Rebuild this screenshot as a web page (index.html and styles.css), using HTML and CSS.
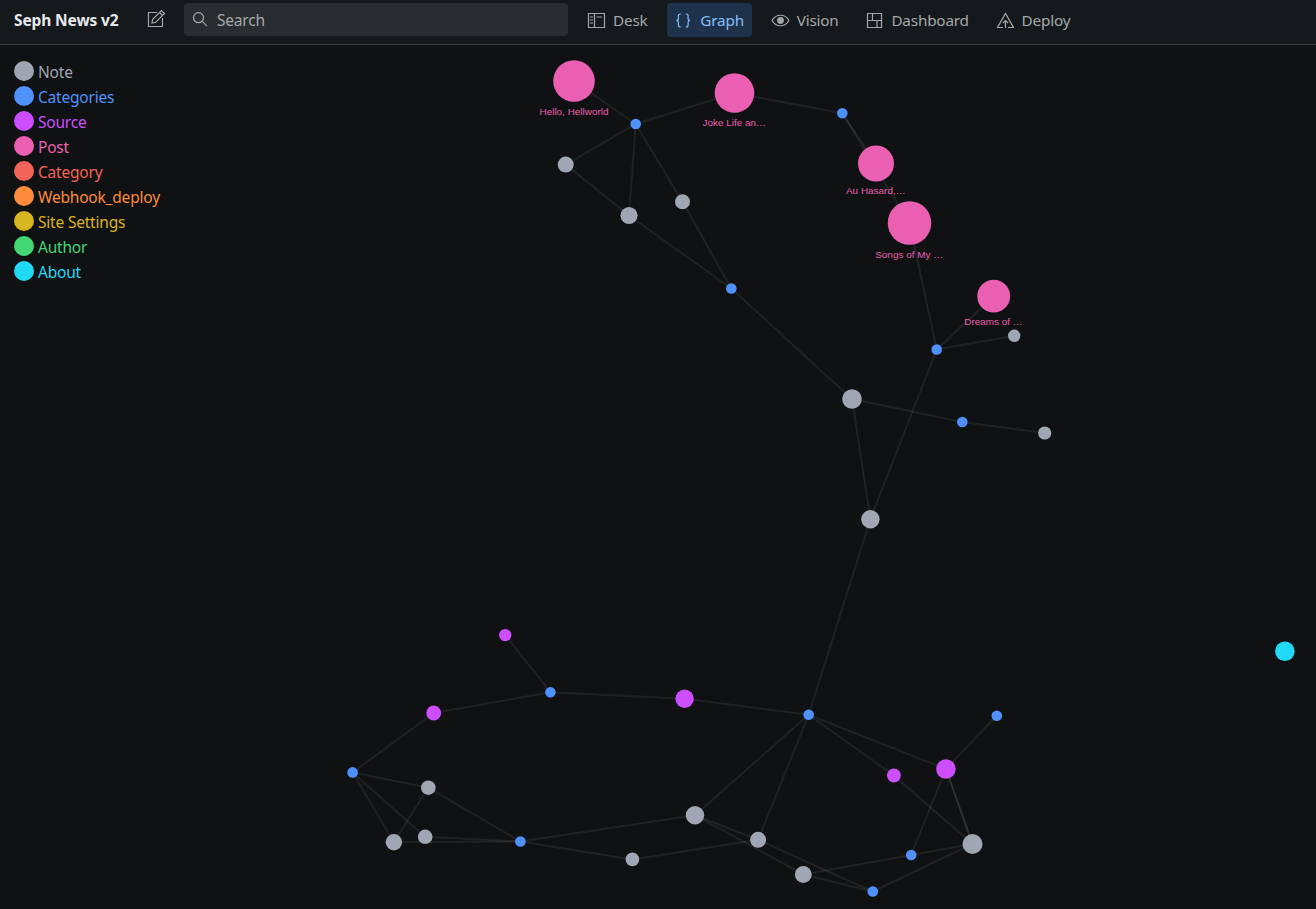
FILE: index.html
```html
<!DOCTYPE html>
<html lang="en">
<head>
    <meta charset="UTF-8">
    <meta name="viewport" content="width=device-width, initial-scale=1.0">
    <title>Seph News v2</title>
    <link rel="stylesheet" href="styles.css">
</head>
<body>
    <header class="navbar">
        <div class="brand">Seph News v2</div>
        <button class="compose" aria-label="Create">
            <svg class="icon" viewBox="0 0 25 25"><path d="M17 6L19 8M14 5.5H5.5V19.5H19.5V11M9 16L9.5 12.5L18.5 3.5L21.5 6.5L12.5 15.5L9 16Z"/></svg>
        </button>
        <div class="search">
            <svg class="search-icon" viewBox="0 0 25 25"><circle cx="10.5" cy="10.7" r="5"/><path d="M14.2 14.4L19 19.2"/></svg>
            <span>Search</span>
        </div>
        <nav class="tools">
            <a class="tool">
                <svg class="icon" viewBox="0 0 25 25"><path d="M10.5 5.5V19.5M6 9H9M6 12H9M6 15H9M12.5 9H18M4.5 5.5H20.5V19.5H4.5Z"/></svg>
                <span>Desk</span>
            </a>
            <a class="tool active">
                <svg class="icon" viewBox="0 0 25 25"><path d="M9.8 6H9.3C7.9 6 7.4 6.8 7.4 8V10.5C7.4 11.8 6.6 12.5 5.3 12.5C6.6 12.5 7.4 13.2 7.4 14.5V17C7.4 18.2 7.9 19 9.3 19H9.8M14.7 6H15.2C16.6 6 17.1 6.8 17.1 8V10.5C17.1 11.8 17.9 12.5 19.2 12.5C17.9 12.5 17.1 13.2 17.1 14.5V17C17.1 18.2 16.6 19 15.2 19H14.7"/></svg>
                <span>Graph</span>
            </a>
            <a class="tool">
                <svg class="icon" viewBox="0 0 25 25"><path d="M4 12.5C8 5.5 17 5.5 21 12.5C17 19.5 8 19.5 4 12.5Z"/><circle class="pupil" cx="12.5" cy="12.5" r="3.4"/></svg>
                <span>Vision</span>
            </a>
            <a class="tool">
                <svg class="icon" viewBox="0 0 25 25"><path d="M5.5 5.5H19.5V19.5H5.5ZM5.5 12.5H19.5M10.5 5.5V12.5M15 12.5V19.5"/></svg>
                <span>Dashboard</span>
            </a>
            <a class="tool">
                <svg class="icon" viewBox="0 0 25 25"><path d="M10 19.5H4.5L12.5 5.5L20.5 19.5H15M12.5 20V12.5M9.8 15.2L12.5 12.5L15.2 15.2"/></svg>
                <span>Deploy</span>
            </a>
        </nav>
    </header>
    <main class="graph">
        <svg class="canvas" viewBox="0 45 1316 864">
            <g id="links"></g>
            <g id="nodes"></g>
            <g class="node-labels">
                <text x="574" y="115">Hello, Hellworld</text>
                <text x="734.3" y="126">Joke Life an…</text>
                <text x="875.8" y="194">Au Hasard,…</text>
                <text x="909.2" y="258">Songs of My …</text>
                <text x="993.5" y="325">Dreams of …</text>
            </g>
        </svg>
        <ul class="legend">
            <li class="note">Note</li>
            <li class="categories">Categories</li>
            <li class="source">Source</li>
            <li class="post">Post</li>
            <li class="category">Category</li>
            <li class="webhook">Webhook_deploy</li>
            <li class="settings">Site Settings</li>
            <li class="author">Author</li>
            <li class="about">About</li>
        </ul>
    </main>
    <script src="graph.js"></script>
</body>
</html>
```
FILE: styles.css
```css
body {
    margin: 0;
    height: 100vh;
    display: flex;
    flex-direction: column;
    overflow: hidden;
    background: #101112;
    color: #a3a7ab;
    font-family: "Segoe UI", "Noto Sans", sans-serif;
    font-size: 15.5px;
    letter-spacing: -0.2px;
    line-height: 20px;
}
.navbar {
    display: flex;
    box-sizing: border-box;
    height: 45px;
    padding: 3px 0 0 14px;
    background: #15191c;
    border-bottom: 1px solid #3a3c42;
}
.brand {
    width: 129px;
    line-height: 35px;
    font-weight: 700;
    letter-spacing: -0.12px;
    color: #e6e8ec;
}
.compose {
    width: 25px;
    height: 33px;
    padding: 0;
    border: none;
    background: none;
    color: inherit;
}
.icon {
    width: 25px;
    height: 25px;
    flex: none;
    display: block;
    fill: none;
    stroke: currentColor;
    stroke-width: 1.2;
}
.icon .pupil {
    fill: currentColor;
    stroke: none;
}
.search {
    display: flex;
    align-items: center;
    box-sizing: border-box;
    width: 384px;
    height: 33px;
    margin-left: 16px;
    padding-left: 4px;
    gap: 4px;
    border-radius: 4px;
    background: #2a2d30;
}
.search-icon {
    width: 25px;
    height: 25px;
    fill: none;
    stroke: currentColor;
    stroke-width: 1.2;
}
.tools {
    display: flex;
    gap: 12px;
    margin-left: 12px;
}
.tool {
    display: flex;
    align-items: center;
    gap: 4px;
    height: 34px;
    padding: 0 7.8px 0 4px;
    border-radius: 4px;
    font-size: 15.3px;
}
.tool.active {
    background: #1e334b;
    color: #85bdf8;
}
.graph {
    position: relative;
    flex: 1;
}
.canvas {
    display: block;
    width: 1316px;
    height: 864px;
}
.canvas line {
    stroke: #fff;
    stroke-opacity: 0.07;
    stroke-width: 2;
}
.node-labels {
    font: 9.95px "Liberation Sans", Arial, sans-serif;
    letter-spacing: 0;
    text-anchor: middle;
    fill: #ea5fb1;
}
.legend {
    position: absolute;
    top: 15px;
    left: 14px;
    margin: 0;
    padding: 0;
    list-style: none;
}
.legend li {
    display: flex;
    gap: 4px;
    height: 25px;
    line-height: 25px;
}
.legend li::before {
    content: "";
    width: 20px;
    height: 20px;
    margin-top: 1px;
    border-radius: 50%;
    background: currentColor;
}
.note { color: #9fa6b4; fill: #9fa6b4; }
.categories { color: #4e91fc; fill: #4e91fc; }
.source { color: #cc4efe; fill: #cc4efe; }
.post { color: #ea5fb1; fill: #ea5fb1; }
.category { color: #f46458; fill: #f46458; }
.webhook { color: #fc8c3c; fill: #fc8c3c; }
.settings { color: #d8b420; fill: #d8b420; }
.author { color: #43d675; fill: #43d675; }
.about { color: #22d9f6; fill: #22d9f6; }
```
FILE: graph.js
```javascript
// [x, y, radius, type]
const nodes = {
    hello: [574, 81, 20.8, "post"],
    joke: [734.5, 93, 19.8, "post"],
    hasard: [876, 163.5, 18, "post"],
    songs: [909.5, 223, 21.8, "post"],
    dreams: [993.7, 296.2, 16.4, "post"],
    c1: [635.7, 124, 5.3, "categories"],
    c2: [842.3, 113.3, 5.3, "categories"],
    c3: [731.3, 288.5, 5.3, "categories"],
    c4: [936.7, 349.5, 5.3, "categories"],
    c5: [962.3, 422, 5.3, "categories"],
    c6: [550.4, 692.2, 5.3, "categories"],
    c7: [352.6, 772.4, 5.3, "categories"],
    c8: [520.4, 841.5, 5.3, "categories"],
    c9: [808.7, 714.8, 5.3, "categories"],
    c10: [996.8, 715.8, 5.3, "categories"],
    c11: [911.2, 855, 5.3, "categories"],
    c12: [872.8, 891.5, 5.3, "categories"],
    n1: [565.7, 164.6, 8, "note"],
    n2: [629, 215.5, 8.6, "note"],
    n3: [682.5, 201.7, 7.5, "note"],
    n4: [1014.2, 335.8, 6.2, "note"],
    n5: [852, 399, 9.8, "note"],
    n6: [1044.7, 433, 6.6, "note"],
    n7: [870.4, 519.2, 9.2, "note"],
    n8: [428.3, 787.7, 7.3, "note"],
    n9: [393.9, 842.2, 8.2, "note"],
    n10: [425.2, 836.8, 7.3, "note"],
    n11: [632.4, 859.4, 6.8, "note"],
    n12: [695, 815.2, 9.2, "note"],
    n13: [758.1, 839.8, 8, "note"],
    n14: [803.3, 874.5, 8.4, "note"],
    n15: [972.5, 844, 10, "note"],
    s1: [505.2, 635.1, 6.2, "source"],
    s2: [433.7, 713, 7.4, "source"],
    s3: [684.6, 698.8, 9.2, "source"],
    s4: [893.9, 775.5, 6.9, "source"],
    s5: [945.9, 769, 9.8, "source"],
    about: [1284.9, 651.2, 9.8, "about"]
};

const links = [
    ["hello", "c1"], ["joke", "c1"], ["joke", "c2"], ["hasard", "c2"], ["songs", "c2"],
    ["songs", "c4"], ["dreams", "c4"], ["n4", "c4"], ["n7", "c4"],
    ["n1", "c1"], ["n2", "c1"], ["n3", "c1"], ["n1", "n2"], ["n2", "c3"], ["n3", "c3"],
    ["n5", "c3"], ["n5", "c5"], ["n6", "c5"], ["n5", "n7"], ["n7", "c9"],
    ["s1", "c6"], ["s2", "c6"], ["s3", "c6"], ["s2", "c7"], ["s3", "c9"],
    ["n8", "c7"], ["n9", "c7"], ["n10", "c7"], ["n8", "n9"],
    ["n8", "c8"], ["n9", "c8"], ["n10", "c8"], ["n12", "c8"], ["n11", "c8"], ["n11", "n13"],
    ["n12", "c9"], ["n13", "c9"], ["s4", "c9"], ["s5", "c9"],
    ["n12", "n13"], ["n12", "n14"], ["n13", "c12"], ["n14", "c12"], ["n14", "c11"],
    ["n15", "c11"], ["n15", "c12"], ["s5", "c11"], ["s5", "c10"],
    ["s4", "n15"], ["s5", "n15"], ["s5", "n15"]
];

function add(parent, tag, attrs) {
    const el = document.createElementNS("http://www.w3.org/2000/svg", tag);
    for (const key in attrs) el.setAttribute(key, attrs[key]);
    document.getElementById(parent).appendChild(el);
}

links.forEach(([a, b]) => {
    const [x1, y1] = nodes[a];
    const [x2, y2] = nodes[b];
    add("links", "line", { x1, y1, x2, y2 });
});

Object.values(nodes).forEach(([cx, cy, r, type]) => {
    add("nodes", "circle", { cx, cy, r, class: type });
});
```
